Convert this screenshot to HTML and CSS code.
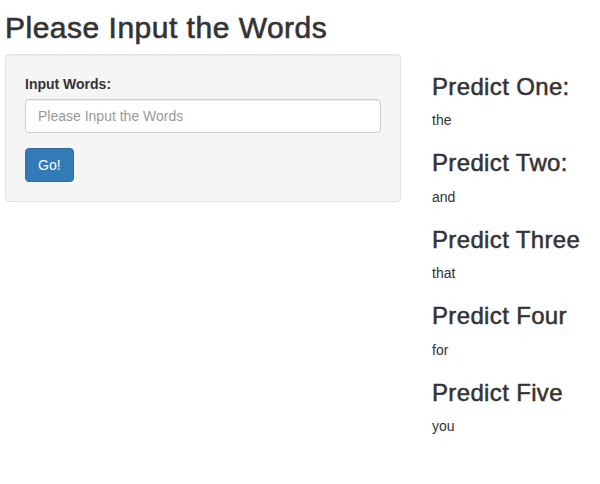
FILE: index.html
```html
<!DOCTYPE html>
<html>
<head>
<meta charset="utf-8">
<title>Predict</title>
<link rel="stylesheet" href="styles.css">
</head>
<body>
<div class="container">
  <h2 class="title">Please Input the Words</h2>
  <div class="row">
    <div class="sidebar">
      <form class="well">
        <div class="form-group">
          <label class="control-label" for="words">Input Words:</label>
          <input id="words" class="form-control" type="text" placeholder="Please Input the Words">
        </div>
        <button type="button" class="btn btn-primary">Go!</button>
      </form>
    </div>
    <div class="main">
      <h3>Predict One:</h3>
      <div class="out">the</div>
      <h3>Predict Two:</h3>
      <div class="out">and</div>
      <h3>Predict Three</h3>
      <div class="out">that</div>
      <h3>Predict Four</h3>
      <div class="out">for</div>
      <h3>Predict Five</h3>
      <div class="out">you</div>
    </div>
  </div>
</div>
</body>
</html>
```
FILE: styles.css
```css
* { box-sizing: border-box; }
html, body { margin: 0; background: #fff; }
body {
  font-family: "Liberation Sans", Arial, Helvetica, sans-serif;
  font-size: 14px;
  line-height: 20px;
  color: #333;
}
.container { padding: 0 5px; }
.title {
  font-size: 30px;
  font-weight: normal;
  letter-spacing: 0.5px;
  -webkit-text-stroke: 0.6px #333;
  line-height: 33px;
  margin: 11px 0 10px;
}
.row {
  display: grid;
  grid-template-columns: 396px 1fr;
  column-gap: 31px;
}
.well {
  margin: 0;
  padding: 19px;
  background: #f5f5f5;
  border: 1px solid #e3e3e3;
  border-radius: 4px;
  box-shadow: inset 0 1px 1px rgba(0,0,0,.05);
}
.form-group { margin-bottom: 15px; }
.control-label {
  display: inline-block;
  font-weight: bold;
  margin-bottom: 5px;
}
.form-control {
  display: block;
  width: 100%;
  height: 34px;
  padding: 6px 12px;
  font-family: inherit;
  font-size: 14px;
  line-height: 20px;
  color: #555;
  background: #fff;
  border: 1px solid #ccc;
  border-radius: 4px;
  box-shadow: inset 0 1px 1px rgba(0,0,0,.075);
  margin: 0;
}
.form-control::placeholder { color: #999; }
.btn {
  display: inline-block;
  height: 34px;
  padding: 6px 12px;
  font-family: inherit;
  font-size: 14px;
  line-height: 20px;
  border-radius: 4px;
  border: 1px solid transparent;
  cursor: pointer;
}
.btn-primary {
  color: #fff;
  background: #337ab7;
  border-color: #2e6da4;
}
.main h3 {
  font-size: 24px;
  font-weight: normal;
  letter-spacing: 0.35px;
  -webkit-text-stroke: 0.5px #333;
  line-height: 26.4px;
  margin: 20px 0 10px;
}
.out { line-height: 20px; }
```
